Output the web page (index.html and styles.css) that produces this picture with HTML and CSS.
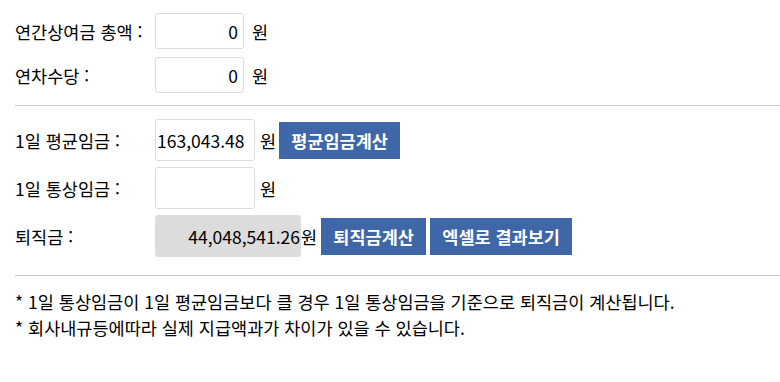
FILE: index.html
```html
<!DOCTYPE html>
<html lang="ko">
<head>
<meta charset="utf-8">
<link rel="stylesheet" href="styles.css">
</head>
<body>
<div class="calc">
  <div class="group first">
    <div class="row">
      <span class="label">연간상여금 총액 :</span>
      <input class="field small right" type="text" value="0">
      <span class="unit gap">원</span>
    </div>
    <div class="row">
      <span class="label">연차수당 :</span>
      <input class="field small right" type="text" value="0">
      <span class="unit gap">원</span>
    </div>
  </div>
  <hr class="divider">
  <div class="group second">
    <div class="row">
      <span class="label">1일 평균임금 :</span>
      <input class="field mid" type="text" value="163,043.48">
      <span class="unit near">원</span>
      <button class="btn b1">평균임금계산</button>
    </div>
    <div class="row">
      <span class="label">1일 통상임금 :</span>
      <input class="field mid" type="text" value="">
      <span class="unit near">원</span>
    </div>
    <div class="row">
      <span class="label">퇴직금 :</span>
      <input class="field wide right readonly" type="text" value="44,048,541.26" readonly>
      <span class="unit">원</span>
      <button class="btn b2">퇴직금계산</button>
      <button class="btn b3">엑셀로 결과보기</button>
    </div>
  </div>
  <hr class="divider">
  <div class="notes">
    <p>* 1일 통상임금이 1일 평균임금보다 클 경우 1일 통상임금을 기준으로 퇴직금이 계산됩니다.</p>
    <p>* 회사내규등에따라 실제 지급액과가 차이가 있을 수 있습니다.</p>
  </div>
</div>
</body>
</html>
```
FILE: styles.css
```css
* { box-sizing: border-box; }
body {
  margin: 0;
  background: #fff;
  color: #000;
  font-family: "Noto Sans CJK KR", "Noto Sans", sans-serif;
  font-size: 17.5px;
}
.calc { padding: 13px 0 0 15px; }
.group { display: flex; flex-direction: column; }
.group.first { gap: 8px; }
.group.second { gap: 6px; }
.row { display: flex; align-items: center; height: 36px; }
.group.second .row { height: 42px; }
.label { width: 140px; flex: none; white-space: nowrap; }
.field {
  font-family: inherit;
  font-size: 17.5px;
  color: #000;
  border: 1px solid #dcdcdc;
  border-radius: 3px;
  background: #fff;
  padding: 0 1px;
  height: 100%;
  outline: none;
}
.field.small { width: 89px; padding-right: 5px; }
.field.mid { width: 100px; }
.field.wide { width: 146px; background: #dcdcdc; border-color: #dcdcdc; padding-right: 0; }
.field.right { text-align: right; }
.unit { flex: none; }
.unit.gap { margin-left: 8px; }
.unit.near { margin-left: 5px; }
.btn {
  font-family: inherit;
  font-weight: 700;
  font-size: 17.5px;
  color: #fff;
  background: #3f66a6;
  border: none;
  border-radius: 0;
  height: 37px;
  padding: 0;
  cursor: pointer;
}
.b1 { width: 121px; margin-left: 3px; }
.b2 { width: 105px; margin-left: 4px; }
.b3 { width: 142px; margin-left: 4px; }
.divider {
  border: none;
  border-top: 1px solid #c8c8c8;
  margin: 12px 0 13px 0;
}
.group.second + .divider { margin: 18px 0 0 0; }
.notes { padding-top: 13px; }
.notes p { margin: 0; line-height: 26px; }
```
